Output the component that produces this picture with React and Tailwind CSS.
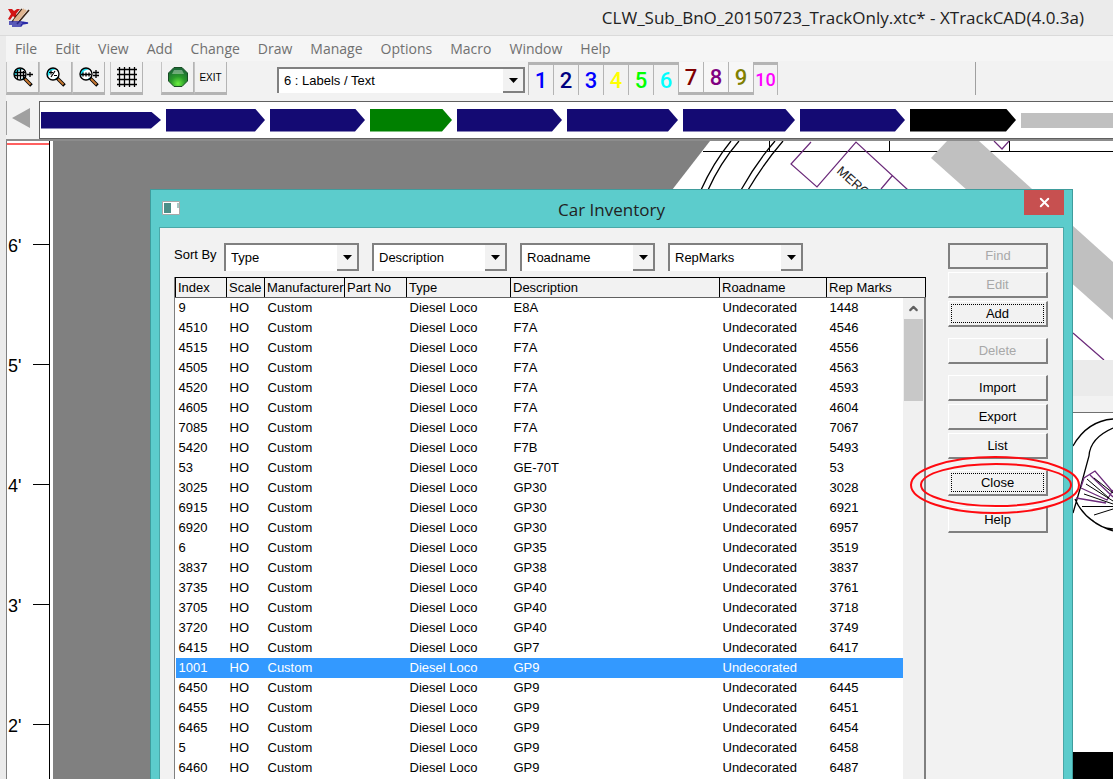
import { X, ChevronUp } from 'lucide-react'
import clsx from 'clsx'

const MENUS = ['File', 'Edit', 'View', 'Add', 'Change', 'Draw', 'Manage', 'Options', 'Macro', 'Window', 'Help']

const LAYERS = [
  { label: '1', color: 'text-[#0000ff]', on: true },
  { label: '2', color: 'text-[#000080]', on: true },
  { label: '3', color: 'text-[#0000ff]', on: true },
  { label: '4', color: 'text-[#ffff00]', on: true },
  { label: '5', color: 'text-[#00ff00]', on: true },
  { label: '6', color: 'text-[#00ffff]', on: true },
  { label: '7', color: 'text-[#800000]', on: false },
  { label: '8', color: 'text-[#800080]', on: false },
  { label: '9', color: 'text-[#808000]', on: false },
  { label: '10', color: 'text-[#ff00ff]', on: true },
]

const HOTBAR = [
  { name: 'Car 1', size: 'h-[17px] w-[120px]', color: 'bg-[#140a73]' },
  { name: 'Car 2', size: 'h-[23px] w-[99px]', color: 'bg-[#140a73]' },
  { name: 'Car 3', size: 'h-[23px] w-[95px]', color: 'bg-[#140a73]' },
  { name: 'Car 4', size: 'h-[23px] w-[82px]', color: 'bg-[#008000]' },
  { name: 'Car 5', size: 'h-[23px] w-[105px]', color: 'bg-[#140a73]' },
  { name: 'Car 6', size: 'h-[23px] w-[111px]', color: 'bg-[#140a73]' },
  { name: 'Car 7', size: 'h-[23px] w-[112px]', color: 'bg-[#140a73]' },
  { name: 'Car 8', size: 'h-[23px] w-[105px]', color: 'bg-[#140a73]' },
  { name: 'Car 9', size: 'h-[23px] w-[106px]', color: 'bg-black' },
]

const RULER = ["6'", "5'", "4'", "3'", "2'"]

const SORT_KEYS = ['Type', 'Description', 'Roadname', 'RepMarks']

const COLUMNS = [
  { title: 'Index', width: 'w-[51px]' },
  { title: 'Scale', width: 'w-[38px]' },
  { title: 'Manufacturer', width: 'w-[80px]' },
  { title: 'Part No', width: 'w-[62px]' },
  { title: 'Type', width: 'w-[104px]' },
  { title: 'Description', width: 'w-[209px]' },
  { title: 'Roadname', width: 'w-[107px]' },
  { title: 'Rep Marks', width: 'w-auto' },
]

// index, description, rep marks
const CARS = [
  ['9', 'E8A', '1448'],
  ['4510', 'F7A', '4546'],
  ['4515', 'F7A', '4556'],
  ['4505', 'F7A', '4563'],
  ['4520', 'F7A', '4593'],
  ['4605', 'F7A', '4604'],
  ['7085', 'F7A', '7067'],
  ['5420', 'F7B', '5493'],
  ['53', 'GE-70T', '53'],
  ['3025', 'GP30', '3028'],
  ['6915', 'GP30', '6921'],
  ['6920', 'GP30', '6957'],
  ['6', 'GP35', '3519'],
  ['3837', 'GP38', '3837'],
  ['3735', 'GP40', '3761'],
  ['3705', 'GP40', '3718'],
  ['3720', 'GP40', '3749'],
  ['6415', 'GP7', '6417'],
  ['1001', 'GP9', ''],
  ['6450', 'GP9', '6445'],
  ['6455', 'GP9', '6451'],
  ['6465', 'GP9', '6454'],
  ['5', 'GP9', '6458'],
  ['6460', 'GP9', '6487'],
]

function AppLogo() {
  return (
    <svg width="22" height="20" viewBox="0 0 22 20" aria-hidden="true">
      <path d="M0 1h4l2 2 3-2h3L8 6l3 4-3 1-3-3-3 4-2-1 3-5z" fill="#d21414" />
      <path d="M14 1L4 14M21 2L9 16" stroke="#3a2416" strokeWidth="1.6" />
      <path d="M16 1L6 13M18 2L8 14" stroke="#e0b590" strokeWidth="2" />
      <path d="M1 14h12l7 1-6 1H1M4 18h9l3-4" stroke="#2a2aa8" strokeWidth="1.4" fill="none" />
    </svg>
  )
}

function Magnifier({ children }) {
  return (
    <svg width="22" height="20" viewBox="0 0 22 20" fill="none" aria-hidden="true">
      <circle cx="8" cy="7" r="6" fill="#fff" />
      <path d="M2 8a6 6 0 0 1 9-6L6 4 4 9z" fill="#20e0f0" />
      <path d="M8 13a6 6 0 0 0 5-3l-2 1z" fill="#20e0f0" />
      <circle cx="8" cy="7" r="6" stroke="#000" strokeWidth="1.4" />
      <path d="M12 11l7.500 7.500" stroke="#000" strokeWidth="3.600" />
      <path d="M13 12l5.500 5.500" stroke="#c87832" strokeWidth="1.800" />
      {children}
    </svg>
  )
}

function ToolButton({ label, children }) {
  return (
    <button
      type="button"
      aria-label={label}
      className="flex h-[33px] w-[33px] items-center justify-center border-r border-b-3 border-l border-[#b4b4b4] border-l-[#c4c4c4] bg-[#f2f2f2] text-[10px]"
    >
      {children}
    </button>
  )
}

function DropArrow() {
  return (
    <span className="pointer-events-none absolute top-0 right-0 bottom-0 flex w-[20px] items-center justify-center border-b-2 border-[#808080] bg-[#f2f2f2]">
      <svg width="9" height="5" viewBox="0 0 9 5" aria-hidden="true">
        <path d="M0 0h9L4.500 5z" fill="#000" />
      </svg>
    </span>
  )
}

function Combo({ id, label, value, options, className }) {
  return (
    <div className={clsx('relative border-2 border-b-0 border-[#808080]', className)}>
      <select
        id={id}
        aria-label={label}
        defaultValue={value}
        className="block h-full w-full appearance-none bg-white pr-6 pl-[5px] text-[13px] text-black outline-none"
      >
        {options.map((o) => (
          <option key={o}>{o}</option>
        ))}
      </select>
      <DropArrow />
    </div>
  )
}

function TitleBar() {
  return (
    <header className="flex h-9 items-center justify-between border-b border-[#dadada] bg-[#ebebeb] pr-[29px] pl-2">
      <AppLogo />
      <h1 className="pt-px font-['Open_Sans',sans-serif] text-[17px] text-[#222]">
        CLW_Sub_BnO_20150723_TrackOnly.xtc* - XTrackCAD(4.0.3a)
      </h1>
    </header>
  )
}

function MenuBar() {
  return (
    <nav className="flex h-[25px] items-center gap-[18px] bg-[#f5f5f5] pl-[9px] font-['Open_Sans',sans-serif] text-sm text-[#707070]">
      {MENUS.map((m) => (
        <button key={m} type="button">
          {m}
        </button>
      ))}
    </nav>
  )
}

function Toolbar() {
  return (
    <div className="flex h-10 items-start bg-[#f2f2f2] pt-px">
      <div className="flex">
        <ToolButton label="Zoom in">
          <Magnifier>
            <path d="M3 5.500h10M2 8.500h12M5.500 3v9M8.500 2v10M11.500 4v7M15 7.500h6M18 5v5" stroke="#000" strokeWidth="1.300" />
          </Magnifier>
        </ToolButton>
        <ToolButton label="Zoom">
          <Magnifier>
            <path d="M4 5.500h4M6 3.500v4M6 10l4-6M9 8.500h3" stroke="#000" strokeWidth="1.200" />
          </Magnifier>
        </ToolButton>
        <ToolButton label="Zoom out">
          <Magnifier>
            <path d="M3 7.500h10M5 5.500v4M8 5.500v4M11 5.500v4M15 5.500h6M15 8.500h6M18 3v8" stroke="#000" strokeWidth="1.300" />
          </Magnifier>
        </ToolButton>
      </div>
      <div className="ml-[5px]">
        <ToolButton label="Snap grid">
          <svg width="20" height="20" viewBox="0 0 20 20" aria-hidden="true">
            <path d="M0 2.500h20M0 7.500h20M0 12.500h20M0 17.500h20M2.500 0v20M7.500 0v20M12.500 0v20M17.500 0v20" stroke="#000" strokeWidth="1.300" />
          </svg>
        </ToolButton>
      </div>
      <div className="ml-[18px] flex">
        <ToolButton label="Run trains">
          <svg width="20" height="20" viewBox="0 0 20 20" aria-hidden="true">
            <defs>
              <radialGradient id="lamp" cx="50%" cy="85%" r="75%">
                <stop offset="0" stopColor="#6cf040" />
                <stop offset="0.500" stopColor="#2a9a2a" />
                <stop offset="1" stopColor="#1c6b35" />
              </radialGradient>
            </defs>
            <path d="M6 .5h8L19.500 6v8L14 19.500H6L.5 14V6z" fill="url(#lamp)" stroke="#184c24" />
            <path d="M6 3h8l2 4H4z" fill="#fff" opacity="0.350" />
          </svg>
        </ToolButton>
        <ToolButton label="Exit">EXIT</ToolButton>
      </div>
      <Combo
        label="Layer"
        value="6 : Labels / Text"
        options={['6 : Labels / Text']}
        className="mt-[5px] ml-[50px] h-[26px] w-[248px]"
      />
      <div className="ml-[3px] flex">
        {LAYERS.map((l) => (
          <button
            key={l.label}
            type="button"
            aria-pressed={l.on}
            className={clsx(
              "flex h-[33px] w-[25px] items-center justify-center border-l border-[#b4b4b4] font-['Roboto',sans-serif]",
              l.label.length > 1 ? 'border-r text-lg font-medium' : 'text-[22px] font-medium',
              l.on ? 'border-t-3' : 'border-b-3 bg-[#f7f7f7]',
              l.color,
            )}
          >
            {l.label}
          </button>
        ))}
      </div>
      <div className="ml-[197px] h-[33px] w-px bg-[#a0a0a0]" />
    </div>
  )
}

function Hotbar() {
  return (
    <div className="flex h-[38px] bg-[#f2f2f2]">
      <button type="button" aria-label="Scroll left" className="mb-1 w-[33px] border-l border-[#a0a0a0] pl-[5px]">
        <svg width="18" height="20" viewBox="0 0 18 20" aria-hidden="true">
          <path d="M0 10L18 0v20z" fill="#a0a0a0" />
        </svg>
      </button>
      <div className="flex min-w-0 flex-1 items-center gap-[5px] overflow-hidden border border-r-0 border-[#606060] bg-white pl-px">
        {HOTBAR.map((car) => (
          <button
            key={car.name}
            type="button"
            aria-label={car.name}
            className={clsx(
              'shrink-0 [clip-path:polygon(0_0,calc(100%_-_10px)_0,100%_50%,calc(100%_-_10px)_100%,0_100%)]',
              car.size,
              car.color,
            )}
          />
        ))}
        <div className="h-[15px] min-w-10 flex-1 bg-[#c0c0c0]" />
      </div>
    </div>
  )
}

function Ruler() {
  return (
    <div className="w-[44px] shrink-0 overflow-hidden border-r border-l border-r-black border-l-[#808080] bg-white text-lg text-black">
      <div className="mt-[2px] h-[2px] bg-[#ff6060]" />
      <div className="pt-[39px]">
        {RULER.map((mark) => (
          <div key={mark} className="flex h-[120px] items-center justify-between pl-px">
            <span className="pt-1">{mark}</span>
            <span className="h-px w-4 bg-black" />
          </div>
        ))}
      </div>
    </div>
  )
}

// Track plan, with the overview map peeking out at the right edge
function TrackPlan() {
  return (
    <svg
      className="absolute inset-0 h-full w-full"
      viewBox="53 141 1060 638"
      preserveAspectRatio="xMinYMin slice"
      fill="none"
      stroke="#000"
      aria-hidden="true"
    >
      <path d="M710 141H1113V779H672V190z" fill="#fff" stroke="none" />
      <path d="M703 151.500H1113M769.500 141v10M889.500 141v10M1009.500 141v10" />
      <path d="M731 141Q713 163 701 190M739 141Q720 163 708 190M775 141Q756 163 741 190M783 141Q764 163 748 190" strokeWidth="1.300" />
      <path d="M811 142L791 164L817 187L856 142L908 190M892 176L881 189M994 141L1002 149L1009 141M1073 333L1104 360" stroke="#6b2a7a" strokeWidth="1.200" />
      <text x="836" y="172" transform="rotate(42 836 172)" fontSize="13" fill="#222" stroke="none">
        MERC
      </text>
      <path d="M931 158L947 141H979L1113 262V320z" fill="#c0c0c0" stroke="none" />
      <path d="M1060 360h53v36h-53z" fill="#ebebeb" stroke="none" />
      <path d="M1060 396h53v16h-53z" fill="#f2f2f2" stroke="none" />
      <path d="M1060 412.500H1113" stroke="#707070" />
      <path d="M1060 752h53v27h-53z" fill="#000" stroke="none" />
      <path d="M1073 446Q1087 421 1113 419M1113 428Q1090 438 1089 456L1080 489L1073 513M1075 499Q1085 522 1113 531M1092 520Q1100 528 1113 529" strokeWidth="1.300" />
      <path d="M1081 487L1084 478L1095 471L1113 492M1090 475L1113 497M1081 488L1107 500L1113 490M1076 498L1106 503" stroke="#6b2a7a" strokeWidth="1.300" />
      <path d="M1094 478L1113 493M1086 484L1113 501M1084 494L1113 504M1087 479L1109 498M1082 506.500H1113M1094 515L1113 509" />
    </svg>
  )
}

function DialogButton({ children, disabled, focused, primary }) {
  return (
    <button
      type="button"
      disabled={disabled}
      className={clsx(
        'h-[26px] w-full border-r-2 border-b-2 border-[#808080] bg-[#f2f2f2] p-[2px] text-[13px] text-black disabled:text-[#a8a8a8]',
        primary && 'border-2',
        !primary && 'border-t border-l border-t-white border-l-white',
      )}
    >
      <span className={clsx('flex h-full items-center justify-center', focused && 'border border-dotted border-black')}>
        {children}
      </span>
    </button>
  )
}

function CarTable() {
  return (
    <div className="relative border-l border-[#808080] bg-white pb-6">
      <table className="w-full table-fixed border-collapse text-left text-[13px] leading-5 text-black">
        <thead>
          <tr className="h-5 bg-[#f2f2f2]">
            {COLUMNS.map((c) => (
              <th
                key={c.title}
                className={clsx(
                  'overflow-hidden border border-black border-b-[#606060] p-0 pl-[2px] leading-[18px] font-normal whitespace-nowrap',
                  c.width,
                )}
              >
                {c.title}
              </th>
            ))}
          </tr>
        </thead>
        <tbody>
          {CARS.map(([index, description, marks]) => (
            <tr
              key={index}
              className={clsx('h-5 [&>td]:p-0 [&>td]:pl-[3px]', index === '1001' && 'bg-[#3399ff] text-white')}
            >
              <td>{index}</td>
              <td>HO</td>
              <td>Custom</td>
              <td />
              <td>Diesel Loco</td>
              <td>{description}</td>
              <td>Undecorated</td>
              <td>{marks}</td>
            </tr>
          ))}
        </tbody>
      </table>
      <div className="absolute top-[21px] right-0 bottom-0 w-[23px] border-r-2 border-[#808080] bg-[#f0f0f0]">
        <button type="button" aria-label="Scroll up" className="flex h-[21px] w-full items-center justify-center text-[#606060]">
          <ChevronUp size={13} strokeWidth={4} />
        </button>
        <div className="mx-px h-[82px] bg-[#c8c8c8]" />
      </div>
    </div>
  )
}

function CarInventory() {
  return (
    <section className="absolute top-[48px] right-10 left-[97px] border border-[#3f9c9c] bg-[#5ccccc] px-2 pb-2">
      <div className="flex h-[37px] items-start">
        <div className="flex w-10 pt-[11px] pl-[3px]">
          <svg width="18" height="14" viewBox="0 0 18 14" aria-hidden="true">
            <path d="M.5.500h17v13H.5z" fill="#fff" stroke="#a8a8a8" />
            <path d="M2 2h7v10H2z" fill="#4a8f88" />
            <path d="M16 2v5" stroke="#4a8f88" />
          </svg>
        </div>
        <h2 className="flex-1 self-center pt-[2px] text-center font-['Open_Sans',sans-serif] text-[17px] text-[#222]">
          Car Inventory
        </h2>
        <button type="button" aria-label="Close window" className="flex h-[25px] w-10 items-center justify-center bg-[#c75050] text-white">
          <X size={15} strokeWidth={3} />
        </button>
      </div>
      <div className="flex gap-[22px] border border-[#4aa8a8] bg-[#f2f2f2] pt-[15px] pr-[15px] pl-[14px]">
        <div className="min-w-0 flex-1">
          <div className="mb-[6px] flex items-start gap-[13px]">
            <label htmlFor="sort-0" className="-mr-[13px] w-[50px] pt-[2px] text-[13px] text-black">
              Sort By
            </label>
            {SORT_KEYS.map((key, i) => (
              <Combo
                key={key}
                id={`sort-${i}`}
                label={i === 0 ? undefined : `Sort key ${i + 1}`}
                value={key}
                options={SORT_KEYS}
                className="h-7 w-[135px]"
              />
            ))}
          </div>
          <CarTable />
        </div>
        <div className="flex w-[100px] shrink-0 flex-col gap-[11px]">
          <div className="flex flex-col gap-[3px]">
            <DialogButton disabled primary>Find</DialogButton>
            <DialogButton disabled>Edit</DialogButton>
            <DialogButton focused>Add</DialogButton>
          </div>
          <DialogButton disabled>Delete</DialogButton>
          <div className="flex flex-col gap-[3px]">
            <DialogButton>Import</DialogButton>
            <DialogButton>Export</DialogButton>
            <DialogButton>List</DialogButton>
          </div>
          <div className="relative">
            <DialogButton focused>Close</DialogButton>
            <svg
              className="pointer-events-none absolute -top-4 -left-[39px] z-10"
              width="172"
              height="60"
              viewBox="0 0 172 60"
              fill="none"
              stroke="#ff0a10"
              strokeWidth="2"
              aria-hidden="true"
            >
              <ellipse cx="86" cy="31" rx="84" ry="28" />
              <ellipse cx="87" cy="31" rx="75" ry="21" />
            </svg>
          </div>
          <DialogButton>Help</DialogButton>
        </div>
      </div>
    </section>
  )
}

export default function App() {
  return (
    <div className="flex h-screen flex-col overflow-hidden bg-[#ebebeb] font-['Liberation_Sans',Arial,sans-serif]">
      <TitleBar />
      <div className="flex min-h-0 flex-1 flex-col pl-[6px]">
        <MenuBar />
        <Toolbar />
        <Hotbar />
        <main className="flex min-h-0 flex-1 border-t-2 border-[#8c8c8c]">
          <Ruler />
          <div className="w-[3px] shrink-0 bg-white" />
          <div className="relative min-w-0 flex-1 bg-[#808080]">
            <TrackPlan />
            <CarInventory />
          </div>
        </main>
      </div>
    </div>
  )
}
